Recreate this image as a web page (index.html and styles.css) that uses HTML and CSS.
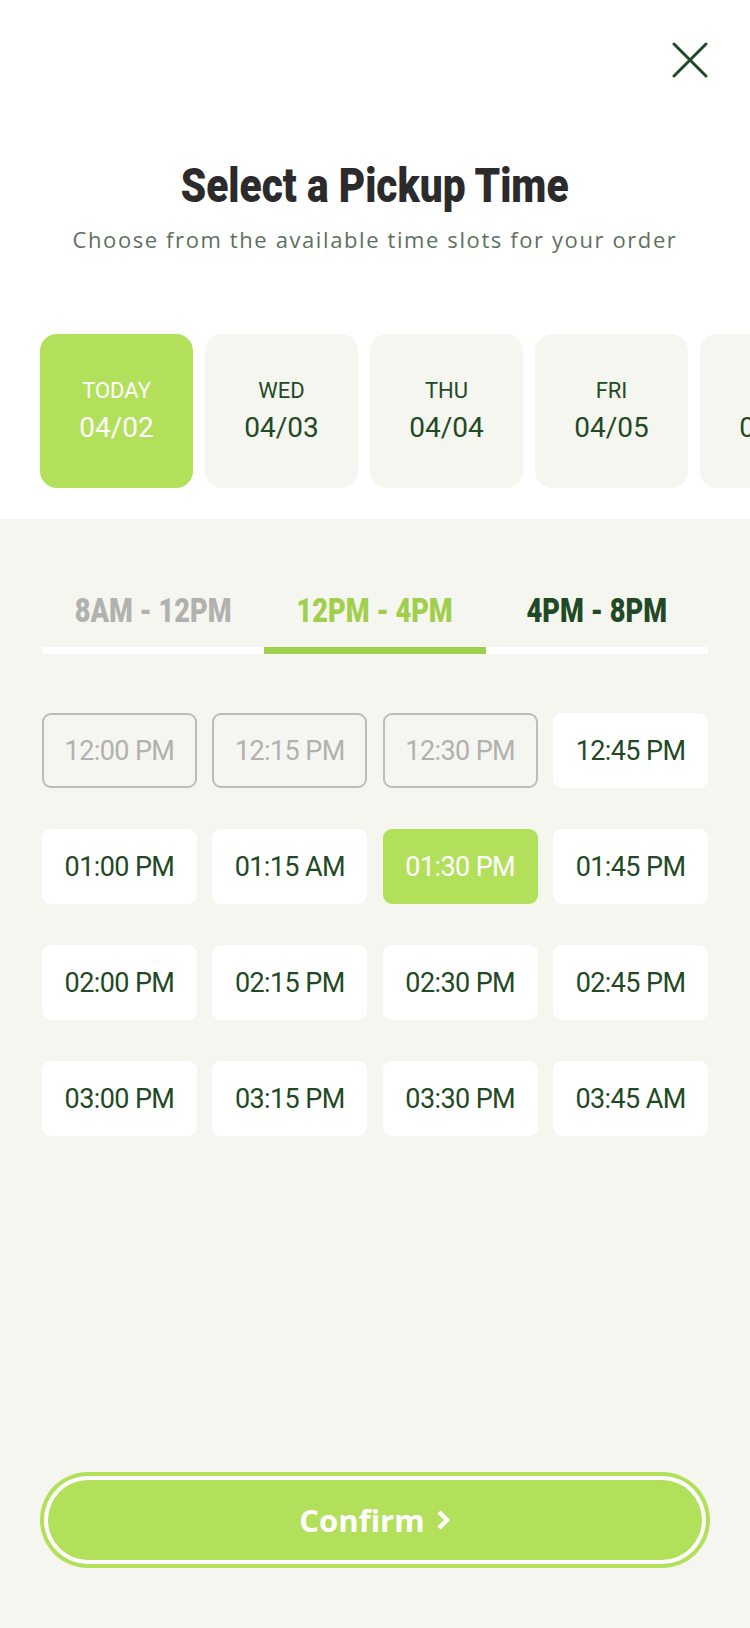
FILE: index.html
```html
<!DOCTYPE html>
<html lang="en">
<head>
  <meta charset="UTF-8">
  <title>Select a Pickup Time</title>
  <link rel="stylesheet" href="styles.css">
</head>
<body>

  <div class="sheet">
    <header class="top">
      <div class="close-row">
        <button class="close" aria-label="Close">
          <svg width="36" height="36" viewBox="0 0 36 36">
            <path d="M2 2 L34 34 M34 2 L2 34" stroke="#1f4a25" stroke-width="3" stroke-linecap="round" fill="none"/>
          </svg>
        </button>
      </div>

      <h1 class="title"><span class="squeeze">Select a Pickup Time</span></h1>
      <p class="subtitle">Choose from the available time slots for your order</p>

      <div class="days">
        <div class="day selected">
          <span class="day-name">TODAY</span>
          <span class="day-date">04/02</span>
        </div>
        <div class="day">
          <span class="day-name">WED</span>
          <span class="day-date">04/03</span>
        </div>
        <div class="day">
          <span class="day-name">THU</span>
          <span class="day-date">04/04</span>
        </div>
        <div class="day">
          <span class="day-name">FRI</span>
          <span class="day-date">04/05</span>
        </div>
        <div class="day">
          <span class="day-name">SAT</span>
          <span class="day-date">04/06</span>
        </div>
      </div>
    </header>

    <section class="panel">
      <div class="tabs">
        <div class="tab off"><span class="squeeze">8AM - 12PM</span></div>
        <div class="tab active"><span class="squeeze">12PM - 4PM</span></div>
        <div class="tab"><span class="squeeze">4PM - 8PM</span></div>
      </div>

      <div class="slots">
        <div class="slot disabled">12:00 PM</div>
        <div class="slot disabled">12:15 PM</div>
        <div class="slot disabled">12:30 PM</div>
        <div class="slot">12:45 PM</div>

        <div class="slot">01:00 PM</div>
        <div class="slot">01:15 AM</div>
        <div class="slot selected">01:30 PM</div>
        <div class="slot">01:45 PM</div>

        <div class="slot">02:00 PM</div>
        <div class="slot">02:15 PM</div>
        <div class="slot">02:30 PM</div>
        <div class="slot">02:45 PM</div>

        <div class="slot">03:00 PM</div>
        <div class="slot">03:15 PM</div>
        <div class="slot">03:30 PM</div>
        <div class="slot">03:45 AM</div>
      </div>

      <button class="confirm">
        Confirm
        <svg width="15" height="22" viewBox="0 0 15 22">
          <path d="M3 3 L11 11 L3 19" stroke="#fff" stroke-width="4.5" fill="none"/>
        </svg>
      </button>
    </section>
  </div>

</body>
</html>
```

FILE: styles.css
```css
:root {
  --lime: #b3e05b;
  --lime-dark: #9fcf4c;
  --green: #1f4a25;
  --panel: #f6f6f1;
  --muted: #b1b1ae;
}

* {
  box-sizing: border-box;
}

body {
  margin: 0;
  background: #fff;
  font-family: Roboto, "Open Sans", sans-serif;
  color: var(--green);
}

.sheet {
  min-height: 100vh;
  display: flex;
  flex-direction: column;
}

.top {
  background: #fff;
  padding-top: 42px;
  padding-bottom: 31px;
}

.close-row {
  display: flex;
  justify-content: flex-end;
  padding: 0 42px;
}

.close {
  width: 36px;
  height: 36px;
  padding: 0;
  border: none;
  background: none;
  cursor: pointer;
}

.close svg {
  display: block;
}

/* condensed display face: no narrow font installed, so squeeze a heavy one */
.squeeze {
  display: inline-block;
  transform: scaleX(0.83);
  white-space: nowrap;
}

.title {
  margin: 84px 0 0;
  font-family: Roboto, sans-serif;
  font-weight: 900;
  font-size: 49px;
  line-height: 48px;
  text-align: center;
  color: #2b2b2b;
}

.subtitle {
  margin: 15px 0 0;
  font-family: "Open Sans", sans-serif;
  font-size: 22px;
  letter-spacing: 1.6px;
  line-height: 28px;
  text-align: center;
  color: #5f705f;
}

.days {
  display: flex;
  gap: 12px;
  margin-top: 81px;
  padding-left: 40px;
  overflow: hidden;
}

.day {
  flex: 0 0 153px;
  height: 154px;
  border-radius: 17px;
  background: var(--panel);
  display: flex;
  flex-direction: column;
  align-items: center;
  justify-content: center;
  gap: 8px;
  color: var(--green);
}

.day.selected {
  background: var(--lime);
  color: #fff;
}

.day-name {
  font-size: 22px;
  line-height: 26px;
}

.day-date {
  font-size: 28px;
  line-height: 32px;
}

.panel {
  flex: 1;
  background: var(--panel);
  padding: 71px 42px 60px;
  display: flex;
  flex-direction: column;
}

.tabs {
  display: grid;
  grid-template-columns: repeat(3, 1fr);
}

.tab {
  padding-bottom: 17px;
  border-bottom: 7px solid #fff;
  text-align: center;
  font-family: Roboto, sans-serif;
  font-weight: 900;
  font-size: 34px;
  line-height: 40px;
  color: var(--green);
}

.tab .squeeze {
  transform: scaleX(0.8);
}

.tab.off {
  color: var(--muted);
}

.tab.active {
  color: var(--lime-dark);
  border-bottom-color: var(--lime-dark);
}

.slots {
  display: grid;
  grid-template-columns: repeat(4, 1fr);
  gap: 41px 15.5px;
  margin-top: 59px;
}

.slot {
  height: 75px;
  border-radius: 9px;
  background: #fff;
  display: flex;
  align-items: center;
  justify-content: center;
  font-size: 27px;
  letter-spacing: -0.6px;
  color: var(--green);
}

.slot.disabled {
  background: transparent;
  border: 2px solid #bdbdb6;
  color: var(--muted);
}

.slot.selected {
  background: var(--lime);
  color: #fff;
}

.confirm {
  margin: auto -2px 0;
  height: 96px;
  border: none;
  border-radius: 48px;
  background: var(--lime);
  box-shadow: inset 0 0 0 4px var(--lime), inset 0 0 0 8px #fff;
  display: flex;
  align-items: center;
  justify-content: center;
  gap: 11px;
  font-family: "Open Sans", sans-serif;
  font-weight: 700;
  font-size: 31px;
  color: #fff;
  cursor: pointer;
}

.confirm svg {
  display: block;
}
```
